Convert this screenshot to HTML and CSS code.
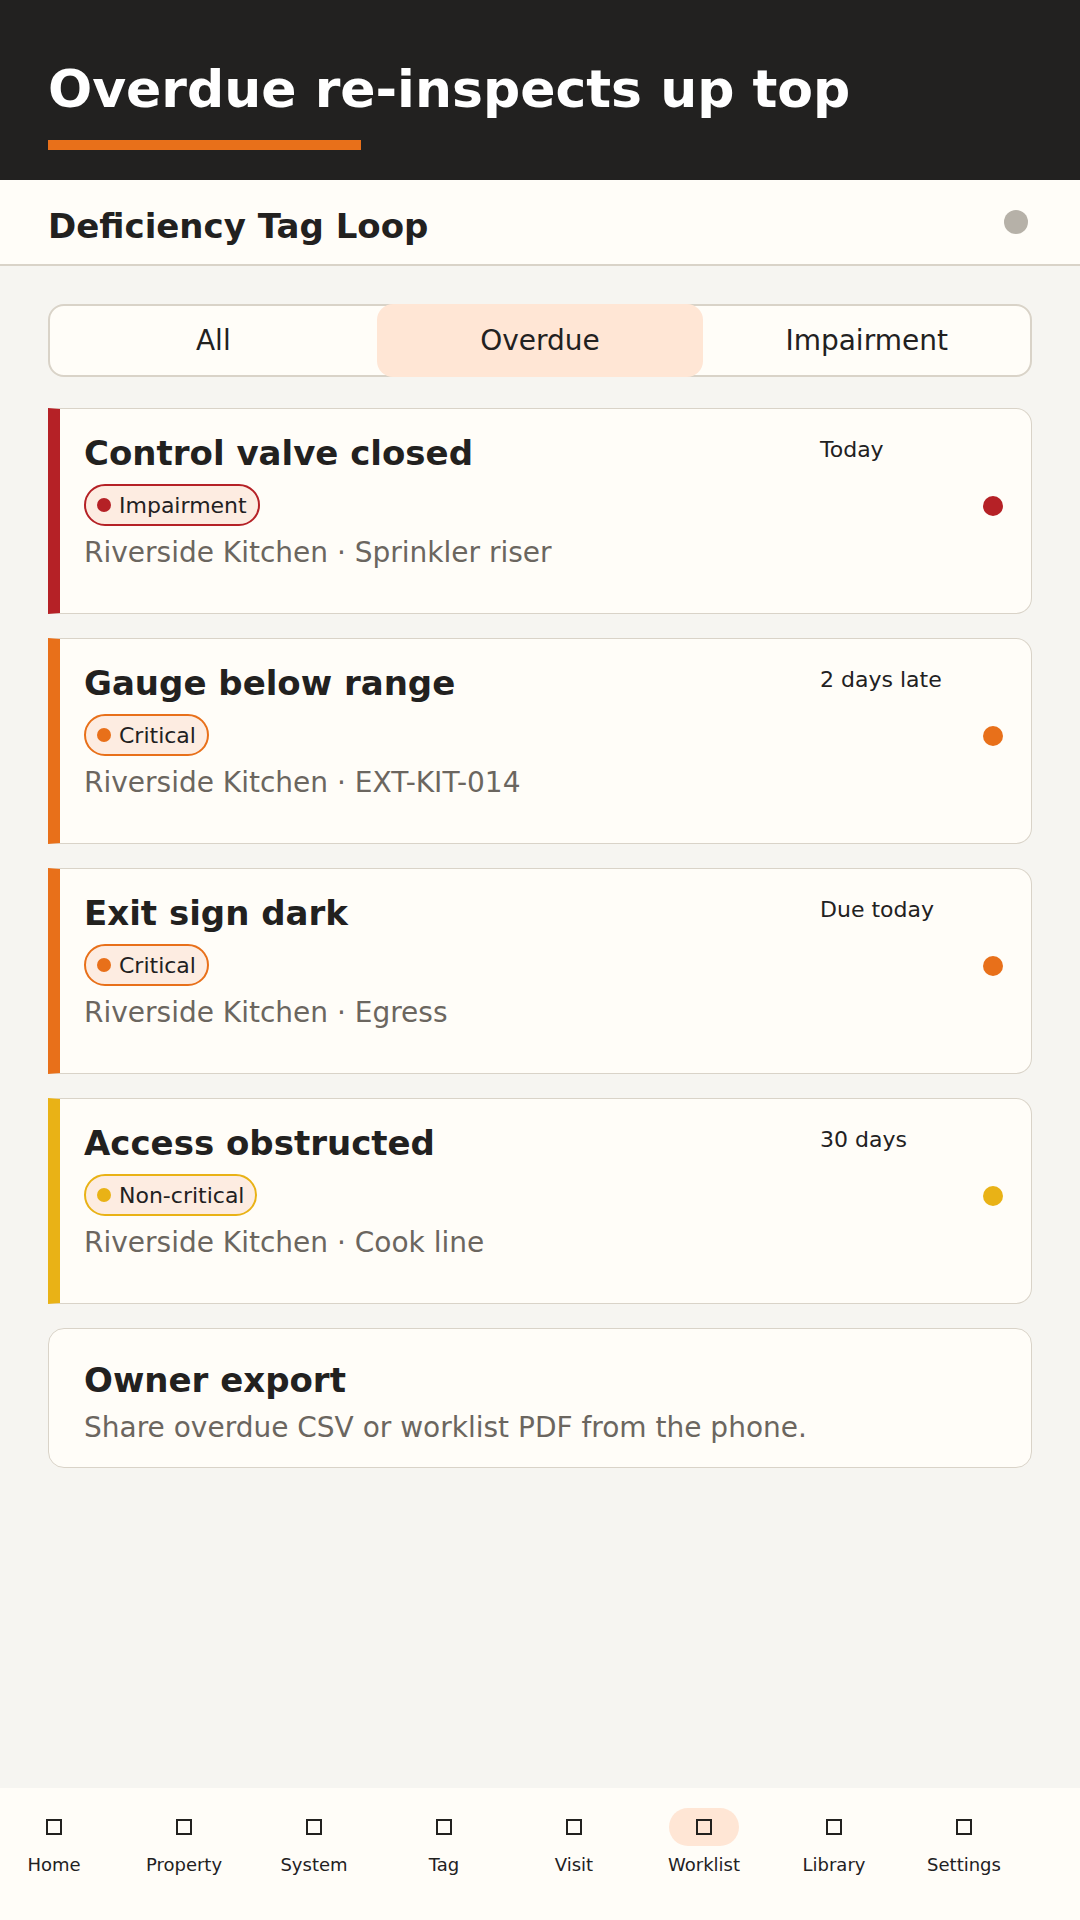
FILE: index.html
```html
<!DOCTYPE html>
<html lang="en">
<head>
  <meta charset="UTF-8">
  <title>Deficiency Tag Loop</title>
  <link rel="stylesheet" href="styles.css">
</head>
<body>
  <div class="app">
    <header class="hero">
      <h1>Overdue re-inspects up top</h1>
      <div class="hero-bar"></div>
    </header>

    <div class="subheader">
      <h2>Deficiency Tag Loop</h2>
      <span class="status-dot"></span>
    </div>

    <main class="content">
      <div class="segments">
        <button class="segment">All</button>
        <button class="segment active">Overdue</button>
        <button class="segment">Impairment</button>
      </div>

      <div class="tag-list">
        <div class="tag-card impairment">
          <div class="tag-title">Control valve closed</div>
          <div class="tag-date">Today</div>
          <span class="badge"><span class="badge-dot"></span>Impairment</span>
          <span class="sev-dot"></span>
          <div class="tag-meta">Riverside Kitchen · Sprinkler riser</div>
        </div>

        <div class="tag-card critical">
          <div class="tag-title">Gauge below range</div>
          <div class="tag-date">2 days late</div>
          <span class="badge"><span class="badge-dot"></span>Critical</span>
          <span class="sev-dot"></span>
          <div class="tag-meta">Riverside Kitchen · EXT-KIT-014</div>
        </div>

        <div class="tag-card critical">
          <div class="tag-title">Exit sign dark</div>
          <div class="tag-date">Due today</div>
          <span class="badge"><span class="badge-dot"></span>Critical</span>
          <span class="sev-dot"></span>
          <div class="tag-meta">Riverside Kitchen · Egress</div>
        </div>

        <div class="tag-card noncritical">
          <div class="tag-title">Access obstructed</div>
          <div class="tag-date">30 days</div>
          <span class="badge"><span class="badge-dot"></span>Non-critical</span>
          <span class="sev-dot"></span>
          <div class="tag-meta">Riverside Kitchen · Cook line</div>
        </div>

        <div class="export-card">
          <div class="tag-title">Owner export</div>
          <div class="tag-meta">Share overdue CSV or worklist PDF from the phone.</div>
        </div>
      </div>
    </main>

    <nav class="bottom-nav">
      <div class="nav-item"><span class="nav-icon"><i></i></span><span class="nav-label">Home</span></div>
      <div class="nav-item"><span class="nav-icon"><i></i></span><span class="nav-label">Property</span></div>
      <div class="nav-item"><span class="nav-icon"><i></i></span><span class="nav-label">System</span></div>
      <div class="nav-item"><span class="nav-icon"><i></i></span><span class="nav-label">Tag</span></div>
      <div class="nav-item"><span class="nav-icon"><i></i></span><span class="nav-label">Visit</span></div>
      <div class="nav-item active"><span class="nav-icon"><i></i></span><span class="nav-label">Worklist</span></div>
      <div class="nav-item"><span class="nav-icon"><i></i></span><span class="nav-label">Library</span></div>
      <div class="nav-item"><span class="nav-icon"><i></i></span><span class="nav-label">Settings</span></div>
    </nav>
  </div>
</body>
</html>
```

FILE: styles.css
```css
* { box-sizing: border-box; }
body { margin: 0; background: #f6f5f1; font-family: "DejaVu Sans", Verdana, sans-serif; color: #22211f; }
.app { min-height: 1920px; display: flex; flex-direction: column; }

/* header */
.hero { background: #222120; padding: 58px 48px 30px; }
.hero h1 { margin: 0; color: #fff; font-size: 52px; line-height: 62px; font-weight: bold; }
.hero-bar { width: 313px; height: 10px; background: #e8701a; margin-top: 20px; }

.subheader { height: 86px; background: #fffdf8; border-bottom: 2px solid #d9d3c8; display: flex; align-items: center; justify-content: space-between; padding: 0 52px 0 48px; }
.subheader h2 { margin: 8px 0 0; font-size: 34px; line-height: 40px; font-weight: bold; }
.status-dot { width: 24px; height: 24px; border-radius: 50%; background: #b6b1a8; }

/* content */
.content { flex: 1; padding: 38px 48px 0; }
.segments { display: grid; grid-template-columns: repeat(3, 1fr); height: 73px; border: 2px solid #d9d3c8; border-radius: 16px; background: #fffdf8; }
.segment { font-family: inherit; font-size: 28px; line-height: 34px; color: #22211f; background: none; border: none; padding: 0; cursor: pointer; }
.segment.active { background: #ffe6d5; border-radius: 16px; margin: -2px 0; }

.tag-list { display: flex; flex-direction: column; gap: 24px; margin-top: 31px; }
.tag-card { display: grid; grid-template-columns: 1fr 183px; row-gap: 10px; background: #fffdf8; border: 1px solid #d9d3c8; border-left: 12px solid #b52126; border-radius: 0 16px 16px 0; padding: 23px 28px 43px 24px; }
.tag-card.critical { border-left-color: #e8701a; }
.tag-card.noncritical { border-left-color: #e9b216; }

.tag-title { font-size: 34px; line-height: 42px; font-weight: bold; }
.tag-date { font-size: 22px; line-height: 26px; margin-top: 5px; }
.tag-meta { font-size: 28px; line-height: 34px; color: #6b665f; }

.badge { justify-self: start; display: inline-flex; align-items: center; gap: 8px; height: 42px; padding: 0 11px; border: 2px solid #b52126; border-radius: 21px; background: #fdece1; font-size: 22px; }
.badge-dot, .sev-dot { border-radius: 50%; background: #b52126; }
.badge-dot { width: 14px; height: 14px; }
.sev-dot { width: 20px; height: 20px; justify-self: end; align-self: center; margin-top: 2px; }

.critical .badge { border-color: #e8701a; }
.critical .badge-dot, .critical .sev-dot { background: #e8701a; }
.noncritical .badge { border-color: #e9b216; }
.noncritical .badge-dot, .noncritical .sev-dot { background: #e9b216; }

.export-card { background: #fffdf8; border: 1px solid #d9d3c8; border-radius: 16px; padding: 30px 28px 22px 35px; display: flex; flex-direction: column; gap: 10px; }

/* bottom nav */
.bottom-nav { height: 132px; background: #fffdf8; display: flex; gap: 22px; padding-top: 20px; }
.nav-item { width: 108px; display: flex; flex-direction: column; align-items: center; }
.nav-icon { padding: 11px 27px; border-radius: 19px; display: flex; }
.nav-icon i { width: 16px; height: 16px; border: 2px solid #22211f; }
.nav-item.active .nav-icon { background: #ffe6d5; }
.nav-label { margin-top: 8px; font-size: 18px; line-height: 22px; }
```
